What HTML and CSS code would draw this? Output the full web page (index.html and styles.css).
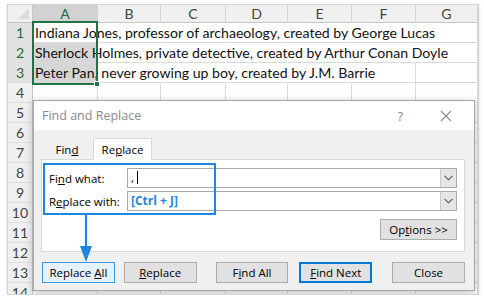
FILE: index.html
```html
<!DOCTYPE html>
<html lang="en">
<head>
    <meta charset="UTF-8">
    <title>Find and Replace</title>
    <link rel="stylesheet" href="styles.css">
</head>
<body>
<div class="sheet">
    <div class="grid">
        <div class="corner"><span class="tri"></span></div>
        <div class="colhead sel">A</div>
        <div class="colhead">B</div>
        <div class="colhead">C</div>
        <div class="colhead">D</div>
        <div class="colhead">E</div>
        <div class="colhead">F</div>
        <div class="colhead">G</div>

        <div class="rowhead sel">1</div>
        <div class="cell"><span class="txt">Indiana Jones, professor of archaeology, created by George Lucas</span></div>
        <div class="cell open"></div><div class="cell open"></div><div class="cell open"></div><div class="cell open"></div><div class="cell open"></div><div class="cell"></div>

        <div class="rowhead sel">2</div>
        <div class="cell shade"><span class="txt">Sherlock Holmes, private detective, created by Arthur Conan Doyle</span></div>
        <div class="cell open"></div><div class="cell open"></div><div class="cell open"></div><div class="cell open"></div><div class="cell open"></div><div class="cell"></div>

        <div class="rowhead sel">3</div>
        <div class="cell shade"><span class="txt">Peter Pan, never growing up boy, created by J.M. Barrie</span></div>
        <div class="cell open"></div><div class="cell open"></div><div class="cell open"></div><div class="cell open"></div><div class="cell"></div><div class="cell"></div>

        <div class="rowhead">4</div><div class="cell"></div><div class="cell"></div><div class="cell"></div><div class="cell"></div><div class="cell"></div><div class="cell"></div><div class="cell"></div>
        <div class="rowhead">5</div><div class="cell"></div><div class="cell"></div><div class="cell"></div><div class="cell"></div><div class="cell"></div><div class="cell"></div><div class="cell"></div>
        <div class="rowhead">6</div><div class="cell"></div><div class="cell"></div><div class="cell"></div><div class="cell"></div><div class="cell"></div><div class="cell"></div><div class="cell"></div>
        <div class="rowhead">7</div><div class="cell"></div><div class="cell"></div><div class="cell"></div><div class="cell"></div><div class="cell"></div><div class="cell"></div><div class="cell"></div>
        <div class="rowhead">8</div><div class="cell"></div><div class="cell"></div><div class="cell"></div><div class="cell"></div><div class="cell"></div><div class="cell"></div><div class="cell"></div>
        <div class="rowhead">9</div><div class="cell"></div><div class="cell"></div><div class="cell"></div><div class="cell"></div><div class="cell"></div><div class="cell"></div><div class="cell"></div>
        <div class="rowhead">10</div><div class="cell"></div><div class="cell"></div><div class="cell"></div><div class="cell"></div><div class="cell"></div><div class="cell"></div><div class="cell"></div>
        <div class="rowhead">11</div><div class="cell"></div><div class="cell"></div><div class="cell"></div><div class="cell"></div><div class="cell"></div><div class="cell"></div><div class="cell"></div>
        <div class="rowhead">12</div><div class="cell"></div><div class="cell"></div><div class="cell"></div><div class="cell"></div><div class="cell"></div><div class="cell"></div><div class="cell"></div>
        <div class="rowhead">13</div><div class="cell"></div><div class="cell"></div><div class="cell"></div><div class="cell"></div><div class="cell"></div><div class="cell"></div><div class="cell"></div>
        <div class="rowhead">14</div><div class="cell"></div><div class="cell"></div><div class="cell"></div><div class="cell"></div><div class="cell"></div><div class="cell"></div><div class="cell"></div>
    </div>

    <div class="selection"><span class="handle"></span></div>

    <div class="dialog">
        <div class="titlebar">
            <span class="title">Find and Replace</span>
            <span class="help">?</span>
            <svg class="close-x" width="12" height="12" viewBox="0 0 12 12">
                <path d="M1 1 L11 11 M11 1 L1 11" stroke="#8a8a8a" stroke-width="1.1" fill="none"/>
            </svg>
        </div>
        <div class="dlg-body">
            <div class="tabs">
                <div class="tab">Fin<u>d</u></div>
                <div class="tab active">Re<u>p</u>lace</div>
            </div>
            <div class="panel">
                <div class="field">
                    <label>Fi<u>n</u>d what:</label>
                    <div class="combo">
                        <span class="value">,<span class="caret"></span></span>
                        <span class="drop">
                            <svg width="9" height="6" viewBox="0 0 9 6"><path d="M0.5 0.8 L4.5 4.8 L8.5 0.8" stroke="#555" stroke-width="1.1" fill="none"/></svg>
                        </span>
                    </div>
                </div>
                <div class="field">
                    <label>R<u>e</u>place with:</label>
                    <div class="combo">
                        <span class="value key">[Ctrl + J]</span>
                        <span class="drop">
                            <svg width="9" height="6" viewBox="0 0 9 6"><path d="M0.5 0.8 L4.5 4.8 L8.5 0.8" stroke="#555" stroke-width="1.1" fill="none"/></svg>
                        </span>
                    </div>
                </div>
                <div class="options-row">
                    <button class="btn options">Op<u>t</u>ions &gt;&gt;</button>
                </div>
            </div>
            <div class="actions">
                <button class="btn hover">Replace <u>A</u>ll</button>
                <button class="btn b-replace"><u>R</u>eplace</button>
                <button class="btn b-findall">F<u>i</u>nd All</button>
                <button class="btn focus b-findnext"><u>F</u>ind Next</button>
                <button class="btn b-close">Close</button>
            </div>
        </div>

        <div class="callout"></div>
        <svg class="arrow" width="14" height="49" viewBox="0 0 14 49">
            <path d="M7 0 L7 36" stroke="#1f86e0" stroke-width="2.2" fill="none"/>
            <path d="M1 32 L13 32 L7 48 Z" fill="#1f86e0"/>
        </svg>
    </div>
</div>
</body>
</html>
```

FILE: styles.css
```css
* {
    box-sizing: border-box;
}

body {
    margin: 0;
    background: #fff;
    font-family: Lato, "Open Sans", sans-serif;
}

.sheet {
    position: relative;
    margin: 4px 0 0 7px;
    width: 472px;
    height: 291px;
    border: 1px solid #d4d4d4;
    overflow: hidden;
    box-shadow: 0 1px 3px rgba(0, 0, 0, 0.15);
}

/* worksheet grid */

.grid {
    display: grid;
    grid-template-columns: 25px 65px 63px 65px 62px 64px 64px 62px;
    grid-template-rows: 18px;
    grid-auto-rows: 20px;
    font-size: 14.1px;
    color: #111;
}

.corner {
    position: relative;
    background: #f0f0f0;
    border-right: 1px solid #c6c6c6;
    border-bottom: 1px solid #c6c6c6;
}

.corner .tri {
    position: absolute;
    right: 3px;
    bottom: 3px;
    width: 0;
    height: 0;
    border-left: 11px solid transparent;
    border-bottom: 11px solid #dcdcdc;
}

.colhead {
    background: #f0f0f0;
    border-right: 1px solid #d4d4d4;
    border-bottom: 1px solid #c6c6c6;
    color: #444;
    text-align: center;
    line-height: 17px;
}

.colhead.sel {
    background: #d2d2d2;
    color: #1f6b42;
    border-bottom: 2px solid #217346;
}

.rowhead {
    background: #f0f0f0;
    border-right: 1px solid #c6c6c6;
    border-bottom: 1px solid #dedede;
    color: #444;
    text-align: center;
    line-height: 19px;
}

.rowhead.sel {
    background: #e1e1e1;
    color: #1f6b42;
}

.cell {
    border-right: 1px solid #dadada;
    border-bottom: 1px solid #dadada;
}

.cell.open {
    border-right-color: transparent;
}

.cell.shade {
    background: #d6d6d6;
}

.txt {
    display: block;
    white-space: nowrap;
    padding-left: 2px;
    line-height: 19px;
}

.selection {
    position: absolute;
    left: 24px;
    top: 16px;
    width: 66px;
    height: 64px;
    border: 2px solid #217346;
}

.selection .handle {
    position: absolute;
    right: -4px;
    bottom: -4px;
    width: 6px;
    height: 6px;
    background: #217346;
    border: 1px solid #fff;
}

/* dialog */

.dialog {
    position: absolute;
    left: 25px;
    top: 95px;
    width: 442px;
    height: 191px;
    background: #f0f0f0;
    border: 1px solid #a6a6a6;
    box-shadow: 0 2px 8px rgba(0, 0, 0, 0.25);
    font-family: "Open Sans", sans-serif;
    font-size: 11.5px;
    color: #000;
}

.titlebar {
    display: flex;
    align-items: center;
    height: 29px;
    background: #fff;
    padding-left: 8px;
}

.title {
    flex: 1;
    color: #8a8a8a;
    font-size: 12.5px;
}

.help {
    color: #8a8a8a;
    font-size: 13px;
    margin-right: 37px;
}

.close-x {
    margin-right: 22px;
}

.dlg-body {
    padding: 7px 9px 0 7px;
}

.tabs {
    display: flex;
    align-items: flex-end;
    height: 22px;
}

.tab {
    width: 52px;
    height: 19px;
    line-height: 19px;
    text-align: center;
    color: #000;
}

.tab.active {
    width: 59px;
    height: 22px;
    line-height: 21px;
    background: #fff;
    border: 1px solid #d9d9d9;
    border-bottom: none;
    position: relative;
    z-index: 1;
    margin-bottom: -1px;
}

.panel {
    height: 93px;
    background: #fff;
    border: 1px solid #d9d9d9;
    padding: 8px 6px 8px 7px;
}

.field {
    display: flex;
    align-items: center;
    margin-bottom: 3px;
}

.field label {
    width: 78px;
}

.combo {
    display: flex;
    width: 330px;
    height: 20px;
    border: 1px solid #a9a9a9;
    background: #fff;
}

.combo .value {
    flex: 1;
    padding-left: 3px;
    line-height: 18px;
}

.caret {
    display: inline-block;
    width: 1px;
    height: 13px;
    background: #000;
    margin-left: 3px;
    vertical-align: -2px;
}

.combo .key {
    color: #1f86e0;
    font-weight: 700;
    font-size: 12px;
}

.drop {
    display: flex;
    align-items: center;
    justify-content: center;
    width: 16px;
    background: #e6e6e6;
    border-left: 1px solid #c9c9c9;
}

.options-row {
    display: flex;
    justify-content: flex-end;
    margin-top: 8px;
    padding-right: 1px;
}

.btn {
    height: 21px;
    width: 73px;
    padding: 0;
    font-family: "Open Sans", sans-serif;
    font-size: 11.5px;
    color: #000;
    background: #e1e1e1;
    border: 1px solid #adadad;
}

.btn.options {
    width: 77px;
}

.btn.hover {
    background: #e5f1fb;
    border-color: #3c9be3;
}

.btn.focus {
    border: 2px solid #0078d7;
}

.actions {
    display: flex;
    margin-top: 10px;
    padding-left: 1px;
}

.b-replace {
    margin-left: 9px;
}

.b-findall {
    margin-left: 19px;
}

.b-findnext {
    margin-left: 11px;
}

.b-close {
    margin-left: 20px;
}

/* annotation drawn over the dialog */

.callout {
    position: absolute;
    left: 9px;
    top: 62px;
    width: 173px;
    height: 52px;
    border: 2px solid #1f86e0;
}

.arrow {
    position: absolute;
    left: 45px;
    top: 113px;
}
```
